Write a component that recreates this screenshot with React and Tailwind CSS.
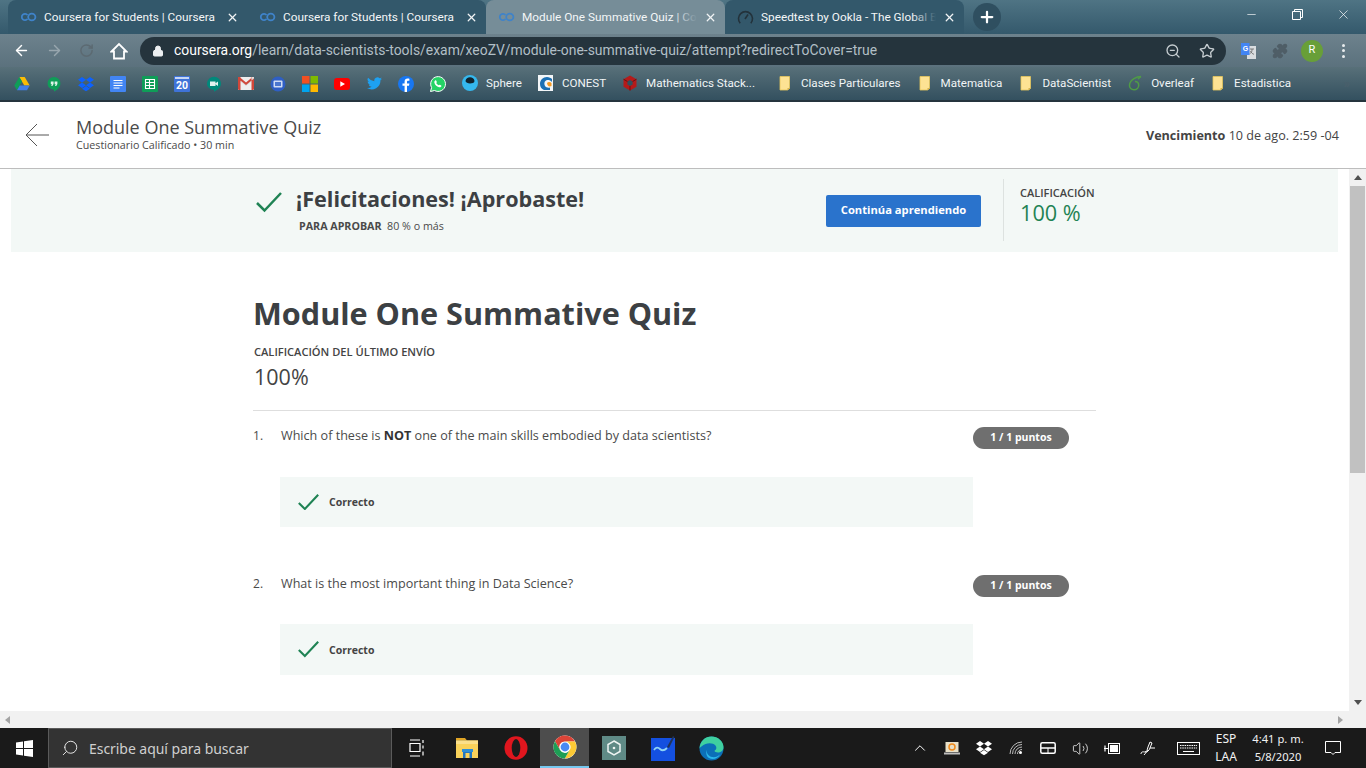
import React from "react";
import { ArrowLeft, ArrowRight, RotateCw, Lock, ZoomOut, Star, Puzzle, X, Plus, Minus, Search, ChevronUp, Volume2 } from "lucide-react";

const CoLogo = () => (
  <svg width="17" height="10" viewBox="0 0 17 10" fill="none" stroke="#3f83c9" strokeWidth="1.8">
    <path d="M7.5 3A3.2 3.2 0 1 0 7.5 7" />
    <ellipse cx="11.8" cy="5" rx="3.6" ry="3.4" />
  </svg>
);

const Gauge = () => (
  <svg width="17" height="17" viewBox="0 0 17 17" fill="none" stroke="#23323b" strokeWidth="1.6">
    <path d="M3.2 14.2a7 7 0 1 1 10.6 0" />
    <path d="M8 10l3-4.5" />
  </svg>
);

function Tab({ title, icon, active, fade, shape }) {
  return (
    <div className={`relative flex items-center h-[34px] w-[239px] shrink-0 pl-[12px] pr-[8px] gap-[7px] ${shape} ${active ? "bg-[#768d98]" : "bg-[#33586b]"}`}>
      <div className="w-[17px] flex justify-center shrink-0">{icon}</div>
      <div className="relative flex-1 overflow-hidden whitespace-nowrap text-[11.8px] text-[#f3f6f7] leading-[16px]">
        {title}
        {fade && <div className={`absolute right-0 top-0 bottom-0 w-[24px] bg-gradient-to-r from-transparent ${active ? "to-[#768d98]" : "to-[#33586b]"}`} />}
      </div>
      <X size={13} strokeWidth={2.4} color="#f1f4f5" className="shrink-0" />
    </div>
  );
}

const Folder = () => (
  <svg width="16" height="16" viewBox="0 0 16 16">
    <path d="M3 1.5h9.5v12l-2 1.5H3z" fill="#fde293" stroke="#e6c65c" strokeWidth="0.8" />
    <path d="M10.5 13h2.5l-2.5 2z" fill="#d9b44a" />
  </svg>
);

function Mark({ children, label, extra = "" }) {
  return (
    <div className={`flex items-center gap-[8px] shrink-0 ${extra}`}>
      <div className="w-[16px] h-[16px] flex items-center justify-center">{children}</div>
      {label && <span className="text-[11.6px] text-[#f1f5f6] whitespace-nowrap">{label}</span>}
    </div>
  );
}

const Drive = () => (
  <svg width="16" height="15" viewBox="0 0 16 15">
    <path d="M5.3 1h5.4l5 8.6h-5.4z" fill="#fbbc04" />
    <path d="M5.3 1L.3 9.6l2.7 4.6 5-8.6z" fill="#0f9d58" />
    <path d="M3 14.2h10l2.7-4.6H5.7z" fill="#3f7ee8" />
  </svg>
);
const Hangouts = () => (
  <svg width="14" height="16" viewBox="0 0 14 16">
    <path d="M7 1a6.4 6.4 0 0 0-6.4 6.4c0 3.5 3 6 6.4 6v2.2c3-1.5 6.4-4.4 6.4-8.2A6.4 6.4 0 0 0 7 1z" fill="#0f9d58" />
    <path d="M3.8 5.5h2.8v2.6l-1.2 2H4.2l.7-1.8H3.8zM7.6 5.5h2.8v2.6l-1.2 2H8l.7-1.8H7.6z" fill="#dff3e8" />
  </svg>
);
const Dropbox = ({ c = "#0d62ff", w = 16 }) => (
  <svg width={w} height={w} viewBox="0 0 16 16" fill={c}>
    <path d="M4 1L0 3.8l4 2.7 4-2.7zM12 1L8 3.8l4 2.7 4-2.7zM0 9.2l4 2.7 4-2.7-4-2.7zM12 6.500l-4 2.700 4 2.700 4-2.700zM4 12.700l4 2.600 4-2.600-4-2.600z" />
  </svg>
);
const Docs = () => (
  <svg width="16" height="16" viewBox="0 0 16 16">
    <rect width="16" height="16" rx="1" fill="#4285f4" />
    <path d="M3.500 4.500h9M3.500 7h9M3.500 9.500h9M3.500 12h6" stroke="#fff" strokeWidth="1" />
  </svg>
);
const Sheets = () => (
  <svg width="16" height="16" viewBox="0 0 16 16">
    <rect width="16" height="16" rx="1" fill="#0f9d58" />
    <path d="M3.500 3.500h9v9h-9zM3.500 6.500h9M3.500 9.500h9M7.500 3.500v9" stroke="#fff" strokeWidth="1.100" fill="none" />
  </svg>
);
const Calendar = () => (
  <div className="relative w-[16px] h-[16px] bg-[#3f73d8] rounded-[1px] flex items-end justify-center">
    <div className="absolute top-[1px] left-[1px] right-[1px] h-[2px] bg-[#c6d6f4]" />
    <span className="text-[10.5px] leading-[12px] font-bold text-white">20</span>
  </div>
);
const Meet = () => (
  <svg width="16" height="16" viewBox="0 0 16 16">
    <path d="M8 .8a7 7 0 0 0-7 7c0 3.600 3.400 6 7 6v2c3.500-1.500 7-4.600 7-8A7 7 0 0 0 8 .8z" fill="#00897b" />
    <path d="M4 5.500h5.500v4.500H4zM9.500 7.200L12 5.500v4.500L9.500 8.300z" fill="#e0f2ef" />
  </svg>
);
const Gmail = () => (
  <svg width="16" height="13" viewBox="0 0 16 13">
    <rect width="16" height="13" fill="#eeeeee" />
    <path d="M0 0l8 6.500L16 0v2.500L8 9 0 2.500z" fill="#d9d9d9" />
    <path d="M0 0h2.500v13H1a1 1 0 0 1-1-1zM16 0h-2.500v13H15a1 1 0 0 0 1-1zM0 0h1.500L8 5.400 14.500 0H16v1.500L8 8 0 1.500z" fill="#d1473a" />
  </svg>
);
const Slides = () => (
  <svg width="16" height="16" viewBox="0 0 16 16">
    <circle cx="8" cy="8" r="7.500" fill="#2f5fc4" />
    <rect x="3.500" y="4.500" width="9" height="7" rx="1" fill="#cfdcf5" />
    <rect x="5" y="6" width="6" height="4" fill="#4a76cf" />
  </svg>
);
const Ms = () => (
  <svg width="16" height="16" viewBox="0 0 16 16">
    <rect width="7.500" height="7.500" fill="#f25022" />
    <rect x="8.500" width="7.500" height="7.500" fill="#7fba00" />
    <rect y="8.500" width="7.500" height="7.500" fill="#00a4ef" />
    <rect x="8.500" y="8.500" width="7.500" height="7.500" fill="#ffb900" />
  </svg>
);
const Youtube = () => (
  <svg width="16" height="12" viewBox="0 0 16 12">
    <rect width="16" height="12" rx="3" fill="#f00" />
    <path d="M6.300 3.300v5.400L11 6z" fill="#fff" />
  </svg>
);
const Twitter = () => (
  <svg width="15" height="13" viewBox="0 0 24 20">
    <path d="M24 2.400a9.800 9.800 0 0 1-2.800.8A4.900 4.900 0 0 0 23.300.5a9.800 9.800 0 0 1-3.100 1.200 4.900 4.900 0 0 0-8.400 4.500A14 14 0 0 1 1.700.9a4.900 4.900 0 0 0 1.500 6.600 4.900 4.900 0 0 1-2.200-.6c0 2.400 1.700 4.400 3.900 4.900a4.900 4.900 0 0 1-2.200.1 4.900 4.900 0 0 0 4.600 3.400A9.900 9.900 0 0 1 0 17.300 14 14 0 0 0 21.500 4.900c1-.7 1.800-1.500 2.500-2.500z" fill="#1da1f2" />
  </svg>
);
const Facebook = () => (
  <svg width="16" height="16" viewBox="0 0 16 16">
    <circle cx="8" cy="8" r="8" fill="#1877f2" />
    <path d="M9 16V9.800h2l.4-2.400H9V6c0-.7.3-1.200 1.300-1.200h1.100V2.700c-.5-.1-1.100-.2-1.800-.2C7.800 2.500 6.600 3.600 6.600 5.600v1.800H4.500v2.400h2.100V16z" fill="#fff" />
  </svg>
);
const Whatsapp = () => (
  <svg width="16" height="16" viewBox="0 0 16 16">
    <path d="M.5 15.500l1.100-3.900A7.400 7.400 0 1 1 4.500 14.500z" fill="#25d366" stroke="#fff" strokeWidth="1" />
    <path d="M5.400 4.300c.8-.6 1.200 1 1.400 1.600.1.500-.6.900-.5 1.200.4.900 1.300 1.800 2.300 2.200.4.100.7-.7 1.200-.6.500.2 1.800.8 1.700 1.300-.3 1.100-1.500 1.500-2.500 1.200C6.500 10.500 4.900 8.700 4.400 6.700c-.2-1 .2-2 1-2.400z" fill="#fff" />
  </svg>
);
const Sphere = () => (
  <svg width="16" height="16" viewBox="0 0 16 16">
    <circle cx="8" cy="8" r="8" fill="#35b8ee" />
    <path d="M3.500 6a4.600 4.600 0 0 1 9 0c0 1.800-2.500 2.500-4.500 2.500S3.500 7.500 3.500 6z" fill="#12242e" />
  </svg>
);
const Conest = () => (
  <svg width="15" height="16" viewBox="0 0 15 16">
    <rect width="15" height="16" fill="#f3f6f8" />
    <path d="M2 9c0-4 3-7 7-7 2 0 4 1 5 2v3C12 5 10 4.500 8 5.500 6 6.500 6 9 7 11c1 1.500 3 2 5 1.500V15H6C3.500 14 2 12 2 9z" fill="#1b6fb3" />
    <path d="M9 8c1-1.500 3-1.500 4.500 0v3c-2 1-4 .500-4.500-3z" fill="#f59a23" />
  </svg>
);
const MathSE = () => (
  <svg width="16" height="16" viewBox="0 0 16 16">
    <path d="M8 .5l6.500 3.700v7.600L8 15.500l-6.500-3.700V4.200z" fill="#b51a1a" />
    <path d="M8 5l2.600 1.500v3L8 11 5.400 9.500v-3z" fill="#33505f" />
    <path d="M1.500 4.200L5.400 6.500M14.500 4.200l-3.900 2.300M8 15.500V11" stroke="#6e0e0e" strokeWidth="1" />
  </svg>
);
const Overleaf = () => (
  <svg width="15" height="16" viewBox="0 0 15 16" fill="none" stroke="#4f9c45" strokeWidth="1.500">
    <path d="M13 1.500C9 1.500 2 4.500 1.500 10c-.3 3 2 4.800 4.500 4.800 2.800 0 4.700-2 4.700-4.500 0-2.200-1.500-3.800-3.700-3.800" />
    <path d="M13 1.500c-1 1-2 1.500-3 2.500" />
  </svg>
);
const Translate = () => (
  <svg width="17" height="16" viewBox="0 0 17 16">
    <path d="M7 3h9v13H7z" fill="#d9dde0" />
    <path d="M10 6h4M12 6v1c0 2-1 3-2.500 4M10.500 8c.5 1.500 2 3 3.500 3.300" stroke="#666" strokeWidth="0.8" fill="none" />
    <path d="M1 0h8.500v12H1z" fill="#4285f4" />
    <text x="2.800" y="8" fontSize="7" fontWeight="700" fill="#fff" fontFamily="Liberation Sans">G</text>
  </svg>
);

const Win = () => (
  <svg width="17" height="17" viewBox="0 0 17 17" fill="#fff">
    <path d="M0 2.500l7-1V8H0zM8 1.300L17 0v8H8zM0 9h7v6.500l-7-1zM8 9h9v8l-9-1.300z" />
  </svg>
);
const TaskView = () => (
  <svg width="16" height="18" viewBox="0 0 16 18" fill="none" stroke="#fff" strokeWidth="1.200">
    <path d="M1 1h10M1 17h10M1 4.500h10v8H1zM14 1v3M14 6.500v3M14 12.500v4" />
  </svg>
);
const Explorer = () => (
  <svg width="22" height="22" viewBox="0 0 22 22">
    <path d="M0 1h9l2 2.500H0z" fill="#e0a526" />
    <path d="M0 3.500h22V21H0z" fill="#f9d25a" />
    <path d="M0 3.500h22V7H0z" fill="#fbe08a" />
    <rect x="6" y="12" width="11" height="3" fill="#2d8fd6" />
    <rect x="7" y="15" width="9" height="6" fill="#2276c0" />
    <rect x="9.500" y="16" width="4" height="5" fill="#f9d25a" />
  </svg>
);
const Opera = () => (
  <svg width="24" height="24" viewBox="0 0 24 24">
    <ellipse cx="12" cy="12" rx="11.500" ry="11.800" fill="#e0161e" />
    <ellipse cx="12" cy="12" rx="4.300" ry="9" fill="#1c1c1c" />
  </svg>
);
const Chrome = () => (
  <svg width="24" height="24" viewBox="0 0 24 24">
    <circle cx="12" cy="12" r="11.500" fill="#fff" />
    <path d="M12 .5A11.500 11.500 0 0 0 2 6.200l5 8.800a5.500 5.500 0 0 1 5-8.500h10A11.500 11.500 0 0 0 12 .5z" fill="#db4437" />
    <path d="M22 6.500H12a5.500 5.500 0 0 1 4.800 8.300l-5 8.700A11.500 11.500 0 0 0 22 6.500z" fill="#fcc934" />
    <path d="M2 6.200a11.500 11.500 0 0 0 9.800 17.300l5-8.700A5.500 5.500 0 0 1 7 15z" fill="#1e9e55" />
    <circle cx="12" cy="12" r="4.400" fill="#4a8af4" />
  </svg>
);
const HexApp = () => (
  <div className="w-[24px] h-[24px] bg-[#5f8a86] flex items-center justify-center">
    <svg width="14" height="16" viewBox="0 0 14 16" fill="none" stroke="#eef4f3" strokeWidth="1.500">
      <path d="M7 1l6 3.500v7L7 15l-6-3.500v-7z" />
      <circle cx="7" cy="8" r="1.300" fill="#eef4f3" stroke="none" />
    </svg>
  </div>
);
const Whiteboard = () => (
  <svg width="24" height="26" viewBox="0 0 24 26">
    <rect y="3" width="24" height="23" fill="#1450e0" />
    <path d="M3 15c2-3 4-3 6-1s4 2 7-1" stroke="#8fd4f5" strokeWidth="1.800" fill="none" />
    <path d="M16 12l6-11 1.500 1-5.500 11z" fill="#20335a" />
  </svg>
);
const Edge = () => (
  <svg width="25" height="25" viewBox="0 0 25 25">
    <circle cx="12.500" cy="12.500" r="12" fill="#0c6fb8" />
    <path d="M.5 12.500C1 5 6 .5 12.500.5 19 .5 24.500 5.500 24.500 11c0 4-3 5.500-5.500 5.500-2 0-3.500-.7-3.500-1.700 2-1 2.500-3.300 1-5.300C14.500 7 10 6.500 6.500 8 3.500 9.300 1.500 11 .5 12.500z" fill="#3fd0a0" />
    <path d="M10 22c-3-2-3.500-6-1.500-9C7 15 8 20 13 21c3 .6 6-.500 8-2.500-2 4-7 6-11 3.500z" fill="#2bb6ea" />
  </svg>
);

function Check({ size = 26, w = 2.4 }) {
  return (
    <svg width={size} height={size * 0.77} viewBox="0 0 26 20" fill="none" stroke="#1f8354" strokeWidth={w}>
      <path d="M1 11l7.500 7.500L25 1" />
    </svg>
  );
}

function Question({ n, children, second }) {
  return (
    <div className={`flex flex-col ${second ? "" : "mb-[48px]"}`}>
      <div className={`flex items-start ${second ? "h-[49px]" : "h-[50px]"}`}>
        <div className="w-[28px] text-[12px] leading-[16px] pt-[1px] text-[#4a4a4a]">{n}.</div>
        <div className="w-[692px] text-[12.6px] leading-[16px] pt-[1px] text-[#4a4a4a]">{children}</div>
        <div className="w-[96px] h-[22px] rounded-full bg-[#6f6f6f] text-white text-[10.5px] font-bold flex items-center justify-center">1 / 1 puntos</div>
      </div>
      <div className={`ml-[27px] w-[693px] bg-[#f3f8f6] flex items-center pl-[18px] gap-[10px] ${second ? "h-[51px]" : "h-[50px]"}`}>
        <Check size={21} w={2.6} />
        <span className="text-[10.5px] font-bold text-[#444] pt-[2px]">Correcto</span>
      </div>
    </div>
  );
}

export default function App() {
  return (
    <div className="w-[1366px] h-[768px] overflow-hidden flex flex-col bg-white font-['Open_Sans',sans-serif]">
      {/* tab strip */}
      <div className="h-[34px] shrink-0 flex items-end pl-[8px] bg-gradient-to-b from-[#4f7484] to-[#34596c] font-['Roboto',sans-serif]">
        <Tab title="Coursera for Students | Coursera" icon={<CoLogo />} shape="rounded-tl-[8px]" />
        <div className="relative shrink-0 w-0 h-[34px]"><div className="absolute left-0 top-[8px] h-[20px] w-px bg-[#5d7a89]" /></div>
        <Tab title="Coursera for Students | Coursera" icon={<CoLogo />} shape="rounded-tr-[8px]" />
        <Tab title="Module One Summative Quiz | Coursera" icon={<CoLogo />} active fade shape="rounded-t-[8px]" />
        <Tab title="Speedtest by Ookla - The Global Broadband" icon={<Gauge />} fade shape="rounded-t-[8px]" />
        <div className="ml-[9px] mb-[3px] w-[28px] h-[28px] rounded-full bg-[#2f4f60] flex items-center justify-center">
          <Plus size={18} strokeWidth={3} color="#fff" />
        </div>
        <div className="ml-auto h-[34px] flex items-start text-white">
          <div className="w-[46px] h-[28px] flex items-center justify-center"><Minus size={13} strokeWidth={1.2} /></div>
          <div className="w-[46px] h-[28px] flex items-center justify-center">
            <svg width="11" height="11" viewBox="0 0 11 11" fill="none" stroke="#fff"><path d="M.5 2.500h8v8h-8zM2.500 2.500v-2h8v8h-2" /></svg>
          </div>
          <div className="w-[46px] h-[28px] flex items-center justify-center"><X size={15} strokeWidth={1.1} /></div>
        </div>
      </div>

      {/* address bar */}
      <div className="h-[33px] shrink-0 flex items-center bg-gradient-to-b from-[#6d828d] to-[#5b717d] font-['Roboto',sans-serif]">
        <div className="w-[140px] flex items-center pl-[13px] gap-[16px] shrink-0">
          <ArrowLeft size={17} color="#fff" strokeWidth={2} />
          <ArrowRight size={17} color="#98a6ae" strokeWidth={2} />
          <RotateCw size={15} color="#5c6a72" strokeWidth={2.4} />
          <svg width="18" height="18" viewBox="0 0 18 18" fill="none" stroke="#fff" strokeWidth="1.800" strokeLinejoin="miter">
            <path d="M1.500 9.500L9 2l7.500 7.500H14V16.500H4V9.500z" />
          </svg>
        </div>
        <div className="w-[1086px] h-[28px] rounded-full bg-[#25343d] flex items-center pl-[12px] pr-[11px] shrink-0">
          <Lock size={12} color="#eceff1" fill="#eceff1" strokeWidth={2} />
          <span className="ml-[10px] text-[13.920px] text-[#b2bfc6] whitespace-nowrap"><span className="text-white">coursera.org</span>/learn/data-scientists-tools/exam/xeoZV/module-one-summative-quiz/attempt?redirectToCover=true</span>
          <div className="ml-auto flex items-center gap-[18px]">
            <ZoomOut size={16} color="#c6cdd1" />
            <Star size={16} color="#c6cdd1" strokeWidth={2} />
          </div>
        </div>
        <div className="flex items-center pl-[14px] gap-[15px]">
          <Translate />
          <Puzzle size={16} color="#4f5e67" fill="#4f5e67" />
          <div className="w-[22px] h-[22px] -ml-[2px] rounded-full bg-[#689f38] text-white text-[11px] flex items-center justify-center">R</div>
          <div className="flex flex-col gap-[2.500px] ml-[4px]">
            <div className="w-[3px] h-[3px] rounded-full bg-[#e8ecee]" />
            <div className="w-[3px] h-[3px] rounded-full bg-[#e8ecee]" />
            <div className="w-[3px] h-[3px] rounded-full bg-[#e8ecee]" />
          </div>
        </div>
      </div>

      {/* bookmarks */}
      <div className="h-[33px] shrink-0 flex items-center pl-[14px] gap-[16px] bg-gradient-to-b from-[#587079] to-[#33505f] font-['Roboto',sans-serif]">
        <Mark><Drive /></Mark>
        <Mark><Hangouts /></Mark>
        <Mark><Dropbox /></Mark>
        <Mark><Docs /></Mark>
        <Mark><Sheets /></Mark>
        <Mark><Calendar /></Mark>
        <Mark><Meet /></Mark>
        <Mark><Gmail /></Mark>
        <Mark><Slides /></Mark>
        <Mark><Ms /></Mark>
        <Mark><Youtube /></Mark>
        <Mark><Twitter /></Mark>
        <Mark><Facebook /></Mark>
        <Mark><Whatsapp /></Mark>
        <Mark label="Sphere"><Sphere /></Mark>
        <Mark label="CONEST"><Conest /></Mark>
        <Mark label="Mathematics Stack..." extra="pr-[6px]"><MathSE /></Mark>
        <Mark label="Clases Particulares"><Folder /></Mark>
        <Mark label="Matematica"><Folder /></Mark>
        <Mark label="DataScientist"><Folder /></Mark>
        <Mark label="Overleaf"><Overleaf /></Mark>
        <Mark label="Estadistica"><Folder /></Mark>
        <span className="ml-auto mr-[16px] text-[13px] font-bold text-[#4a5f6b]">»</span>
      </div>
      <div className="h-[2px] shrink-0 bg-[#25343d]" />

      {/* course header */}
      <div className="h-[67px] shrink-0 flex items-center border-b border-[#bdbdbd] pl-[25px] pr-[27px]">
        <svg width="25" height="24" viewBox="0 0 25 24" fill="none" stroke="#555" strokeWidth="1">
          <path d="M24 12H1M12 1L1 12l11 11" />
        </svg>
        <div className="ml-[26px] flex flex-col -mt-[3px]">
          <div className="text-[18px] leading-[24px] text-[#4a4a4a]">Module One Summative Quiz</div>
          <div className="text-[10.700px] leading-[13px] text-[#4a4a4a]">Cuestionario Calificado • 30 min</div>
        </div>
        <div className="ml-auto text-[12.600px] text-[#444] mt-[3px]"><b className="font-bold">Vencimiento</b> 10 de ago. 2:59 -04</div>
      </div>

      {/* scroll area */}
      <div className="flex-1 min-h-0 flex">
        <div className="flex-1 min-w-0 overflow-hidden pl-[11px] pr-[11px]">
          <div className="h-[83px] bg-[#f3f8f6] flex items-center pl-[245px]">
            <div className="w-[40px] -mt-[16px]"><Check size={26} w={2.5} /></div>
            <div className="flex flex-col w-[530px]">
              <div className="text-[21.600px] leading-[28px] font-bold text-[#3c4043]">¡Felicitaciones! ¡Aprobaste!</div>
              <div className="ml-[3px] mt-[3px] text-[10.700px] leading-[20px] text-[#4a4a4a]"><b className="font-bold">PARA APROBAR</b>&nbsp;&nbsp;80 % o más</div>
            </div>
            <div className="w-[155px] h-[32px] bg-[#2a73cc] rounded-[2px] text-white text-[11.200px] font-bold flex items-center justify-center">Continúa aprendiendo</div>
            <div className="ml-[22px] w-px h-[62px] bg-[#dde2e0] -mt-[2px]" />
            <div className="ml-[16px] flex flex-col -mt-[10px]">
              <div className="text-[11px] leading-[14px] font-semibold text-[#444]">CALIFICACIÓN</div>
              <div className="text-[21.700px] leading-[26px] text-[#1f8354]">100 %</div>
            </div>
          </div>
          <div className="ml-[242px] w-[843px] pt-[41px]">
            <h1 className="text-[30.600px] leading-[40px] font-bold text-[#3c4043]">Module One Summative Quiz</h1>
            <div className="mt-[12px] ml-[1px] text-[11.100px] leading-[14px] font-semibold text-[#444]">CALIFICACIÓN DEL ÚLTIMO ENVÍO</div>
            <div className="mt-[3px] ml-[1px] text-[21.500px] leading-[30px] text-[#444]">100%</div>
            <div className="mt-[18px] mb-[16px] h-px bg-[#dedede]" />
            <Question n={1}>Which of these is <b className="font-bold text-[#333]">NOT</b> one of the main skills embodied by data scientists?</Question>
            <Question n={2} second>What is the most important thing in Data Science?</Question>
          </div>
        </div>
        <div className="w-[17px] shrink-0 bg-[#f1f1f1] flex flex-col items-center">
          <div className="h-[17px] flex items-center justify-center"><div className="w-0 h-0 border-l-[4px] border-r-[4px] border-b-[5px] border-l-transparent border-r-transparent border-b-[#505050]" /></div>
          <div className="w-[15px] h-[287px] bg-[#c1c1c1]" />
          <div className="mt-auto h-[17px] flex items-center justify-center"><div className="w-0 h-0 border-l-[4px] border-r-[4px] border-t-[5px] border-l-transparent border-r-transparent border-t-[#505050]" /></div>
        </div>
      </div>

      {/* h scrollbar */}
      <div className="h-[17px] shrink-0 bg-[#f1f1f1] flex items-center justify-between pl-[5px] pr-[23px]">
        <div className="w-0 h-0 border-t-[4px] border-b-[4px] border-r-[5px] border-t-transparent border-b-transparent border-r-[#a3a3a3]" />
        <div className="w-0 h-0 border-t-[4px] border-b-[4px] border-l-[5px] border-t-transparent border-b-transparent border-l-[#a3a3a3]" />
      </div>

      {/* taskbar */}
      <div className="h-[40px] shrink-0 bg-[#1a1a1a] flex items-center font-['Noto_Sans',sans-serif]">
        <div className="w-[48px] flex justify-center"><Win /></div>
        <div className="w-[344px] h-[40px] bg-[#333333] border border-[#5a5a5a] flex items-center pl-[12px] gap-[10px]">
          <Search size={18} color="#e6e6e6" strokeWidth={1.3} className="-scale-x-100" />
          <span className="text-[14px] text-[#cfcfcf] tracking-[-0.05px]">Escribe aquí para buscar</span>
        </div>
        <div className="w-[50px] flex justify-center"><TaskView /></div>
        <div className="w-[49px] flex justify-center"><Explorer /></div>
        <div className="w-[49px] flex justify-center"><Opera /></div>
        <div className="w-[49px] h-[40px] bg-[#4d4d4d] border-b-[2px] border-[#76c8ef] flex items-center justify-center"><Chrome /></div>
        <div className="w-[49px] flex justify-center"><HexApp /></div>
        <div className="w-[49px] flex justify-center"><Whiteboard /></div>
        <div className="w-[49px] flex justify-center"><Edge /></div>
        <div className="ml-auto flex items-center h-[40px] text-white pr-[10px]">
          <div className="w-[32px] flex justify-center"><ChevronUp size={18} strokeWidth={1.300} color="#fff" /></div>
          <div className="w-[32px] flex justify-center">
            <svg width="16" height="13" viewBox="0 0 16 13"><rect x="1.500" width="13" height="10" fill="#e8e0c8" /><circle cx="8" cy="5" r="3" fill="none" stroke="#ee8a1d" strokeWidth="1.500" /><rect y="10.500" width="16" height="2" fill="#bdbdbd" /></svg>
          </div>
          <div className="w-[32px] flex justify-center"><Dropbox c="#fff" /></div>
          <div className="w-[32px] flex justify-center">
            <svg width="14" height="14" viewBox="0 0 14 14" fill="none" stroke="#bbb" strokeWidth="1"><path d="M1 13A12 12 0 0 1 13 1M3.500 13A9.500 9.500 0 0 1 13 3.500M6 13a7 7 0 0 1 7-7M8.500 13A4.500 4.500 0 0 1 13 8.500" /><circle cx="11.500" cy="11.500" r="1.500" fill="#fff" stroke="none" /></svg>
          </div>
          <div className="w-[32px] flex justify-center">
            <svg width="16" height="12" viewBox="0 0 16 12" fill="none" stroke="#fff" strokeWidth="1.500"><rect x=".8" y=".8" width="14.400" height="10.400" rx="1.500" /><path d="M1 6h14" /><path d="M8 6v5" strokeWidth="1" /></svg>
          </div>
          <div className="w-[32px] flex justify-center"><Volume2 size={17} strokeWidth={1.100} color="#fff" /></div>
          <div className="w-[32px] flex justify-center">
            <svg width="16" height="11" viewBox="0 0 16 11" fill="none" stroke="#fff"><rect x="4.500" y=".5" width="11" height="10" /><rect x="6" y="2" width="8" height="7" fill="#fff" stroke="none" /><path d="M0 5.500h4M1 2.500v6" strokeWidth="1.200" /></svg>
          </div>
          <div className="w-[32px] ml-[4px] flex justify-center">
            <svg width="16" height="16" viewBox="0 0 16 16" fill="none" stroke="#fff" strokeWidth="1"><path d="M1 14c0-3 3-2 4-2 2 0 2-2 3-5l2-5 2 1-2 5c-1 3-3 4-5 4M10 8l5 0" /><path d="M4 15c2-3 3-2 4-5" /></svg>
          </div>
          <div className="w-[32px] ml-[8px] flex justify-center">
            <svg width="23" height="13" viewBox="0 0 23 13" fill="none" stroke="#fff"><rect x=".5" y=".5" width="22" height="12" /><path d="M3 3.500h17M3 6h17" strokeDasharray="1.500 .8" /><path d="M6 9.500h11" /></svg>
          </div>
          <div className="w-[40px] ml-[2px] flex flex-col items-center text-[12px] leading-[18px] text-[#f2f2f2]"><span>ESP</span><span>LAA</span></div>
          <div className="w-[64px] flex flex-col items-center text-[11.200px] leading-[18px] text-[#f2f2f2] whitespace-nowrap"><span>4:41 p. m.</span><span>5/8/2020</span></div>
          <div className="w-[46px] flex justify-center">
            <svg width="16" height="16" viewBox="0 0 16 16" fill="none" stroke="#fff"><path d="M.5 1.500h15v11H10l-2 2-2-2H.5z" /></svg>
          </div>
        </div>
      </div>
    </div>
  );
}
